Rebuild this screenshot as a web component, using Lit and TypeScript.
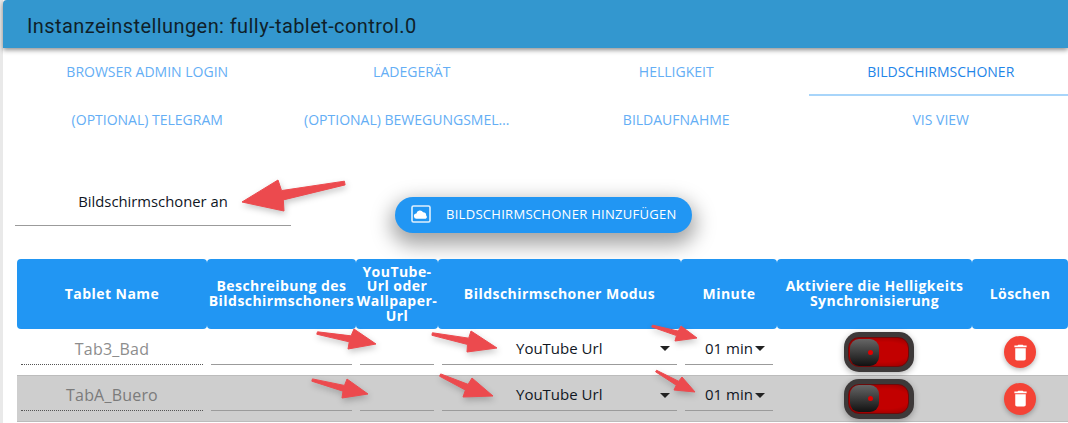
import { LitElement, html, css, svg } from "lit";
import { customElement } from "lit/decorators.js";

type P = [number, number];
const ARROWS: [P, P, P, P][] = [
  [[345, 183], [242, 202], [278, 180], [284, 211]],
  [[317, 333], [376, 344], [354, 329], [348, 349]],
  [[312, 380], [368, 394], [347, 379], [342, 398]],
  [[432, 334], [497, 348], [471, 331], [467, 352]],
  [[440, 375], [493, 396], [472, 378], [463, 397]],
  [[652, 326], [697, 338], [681, 326], [675, 341]],
  [[656, 371], [695, 392], [682, 377], [674, 390]],
];

function arrowPoints([tail, tip, w1, w2]: [P, P, P, P]) {
  const mx = (w1[0] + w2[0]) / 2 + (tail[0] - tip[0]) * 0.02;
  const my = (w1[1] + w2[1]) / 2 + (tail[1] - tip[1]) * 0.02;
  const j = (w: P, f: number): P => [mx + (w[0] - mx) * f, my + (w[1] - my) * f];
  const j1 = j(w1, 0.3);
  const j2 = j(w2, 0.3);
  const t = (w: P): P => [tail[0] + (w[0] - mx) * 0.12, tail[1] + (w[1] - my) * 0.12];
  return [t(w1), j1, w1, tip, w2, j2, t(w2)].map((p) => p.join(",")).join(" ");
}

const TABS = [
  "Browser Admin Login", "Ladegerät", "Helligkeit", "Bildschirmschoner",
  "(Optional) Telegram", "(Optional) Bewegungsmel…", "Bildaufnahme", "VIS View",
];
const HEADS = [
  "Tablet Name", "Beschreibung des Bildschirmschoners", "YouTube-Url oder Wallpaper-Url",
  "Bildschirmschoner Modus", "Minute", "Aktiviere die Helligkeits Synchronisierung", "Löschen",
];
const ROWS = ["Tab3_Bad", "TabA_Buero"];

@customElement("app-root")
export class AppRoot extends LitElement {
  static styles = css`
    :host {
      display: block;
      position: relative;
      width: 1068px;
      height: 423px;
      overflow: hidden;
      background: #fff;
      font-family: "Open Sans", sans-serif;
    }
    .page {
      border-left: 3px solid #e9e9e9;
      height: 423px;
      box-sizing: border-box;
    }
    .bar {
      height: 48px;
      background: #3397cf;
      border-top-left-radius: 4px;
      box-shadow: 0 2px 5px rgba(0, 0, 0, 0.45);
      display: flex;
      align-items: center;
      padding: 3px 0 0 24px;
      box-sizing: border-box;
      font: 400 20px Roboto, sans-serif;
      letter-spacing: 0.42px;
      color: #0f1f2a;
      position: relative;
    }
    .tabs {
      display: grid;
      grid-template-columns: repeat(4, 264.5px);
      grid-auto-rows: 48px;
      margin-left: 12px;
    }
    .tab {
      display: flex;
      align-items: center;
      justify-content: center;
      font-size: 14px;
      text-transform: uppercase;
      color: #64aef5;
      box-sizing: border-box;
      white-space: nowrap;
      padding-bottom: 2px;
    }
    .tab.on {
      color: #1f85e8;
      border-bottom: 2px solid #a8d5fa;
      padding-bottom: 0;
    }
    .tab.cut { padding-right: 10px; }
    .tools {
      display: flex;
      height: 115px;
      margin-left: 12px;
    }
    .pick {
      width: 276px;
      height: 49px;
      margin-top: 33px;
      border-bottom: 1px solid #9b9b9b;
      display: flex;
      align-items: center;
      justify-content: center;
      box-sizing: border-box;
      font-size: 14.8px;
      color: #10161f;
    }
    .add {
      width: 297px;
      height: 36px;
      margin: 53px 0 0 104px;
      border-radius: 18px;
      background: #2196f3;
      box-shadow: 0 8px 20px 4px rgba(0, 0, 0, 0.36);
      color: #fff;
      display: flex;
      align-items: center;
      font-size: 13px;
      letter-spacing: 0.29px;
      text-transform: uppercase;
      padding: 0 0 2px 16px;
      gap: 15px;
      box-sizing: border-box;
      white-space: nowrap;
      font-weight: 500;
    }
    .add svg { width: 20px; height: 20px; flex: none; }
    .grid {
      display: grid;
      grid-template-columns: 190px 149px 82px 243px 96px 195px 96px;
      margin-left: 14px;
    }
    .h {
      height: 70px;
      background: #2196f3;
      border-radius: 4px;
      color: #fff;
      display: flex;
      align-items: center;
      justify-content: center;
      text-align: center;
      font-size: 14px;
      line-height: 14.6px;
      font-weight: 700;
      letter-spacing: 0.45px;
    }
    .c {
      height: 47px;
      border-bottom: 1px solid #bcbcbc;
      box-sizing: border-box;
      display: flex;
      align-items: center;
      justify-content: center;
    }
    .c.alt { background: #cecece; height: 46px; }
    .field {
      flex: 1;
      align-self: flex-start;
      height: 36px;
      margin: 0 4px;
      padding-top: 3px;
      border-bottom: 1px solid #9b9b9b;
      display: flex;
      align-items: center;
      box-sizing: border-box;
      font-size: 15px;
      color: #10161f;
      position: relative;
    }
    .alt .field { height: 35px; padding-top: 1px; }
    .name {
      justify-content: center;
      border-bottom: 1px dotted #555;
      color: #8d8d8d;
      font-size: 16px;
      letter-spacing: 0.2px;
      padding-top: 5px;
    }
    .alt .name { color: #7b7b7b; padding-top: 3px; }
    .mode { padding-left: 74px; }
    .min { padding-left: 20px; }
    .caret {
      position: absolute;
      right: 7px;
      top: 17px;
      border-left: 5px solid transparent;
      border-right: 5px solid transparent;
      border-top: 5px solid #222;
    }
    .min .caret { right: 8px; }
    .sw {
      width: 70px;
      height: 40px;
      margin-left: 9px;
      border-radius: 15px;
      background: #3d3939;
      box-shadow: 0 2px 6px rgba(0, 0, 0, 0.3);
      padding: 5px 5px 5px 4px;
      box-sizing: border-box;
    }
    .track {
      height: 30px;
      border-radius: 11px;
      border: 1px solid #6d0a0a;
      background: radial-gradient(ellipse at 60% 50%, #c20000 50%, #880000 100%);
      box-sizing: border-box;
      display: flex;
      align-items: center;
      padding-left: 1px;
    }
    .knob {
      width: 29px;
      height: 27px;
      border-radius: 9px;
      background: linear-gradient(#666, #111);
      display: flex;
      align-items: center;
      justify-content: flex-end;
      padding-right: 6px;
      box-sizing: border-box;
    }
    .led { width: 5px; height: 5px; border-radius: 50%; background: #e00000; }
    .del {
      width: 32px;
      height: 32px;
      border-radius: 50%;
      background: #f44336;
      display: flex;
      align-items: center;
      justify-content: center;
      box-shadow: 0 2px 5px rgba(0, 0, 0, 0.28);
    }
    .del svg { width: 21px; height: 21px; fill: #fff; }
    .marks {
      position: absolute;
      inset: 0;
      width: 1068px;
      height: 423px;
      pointer-events: none;
      filter: drop-shadow(1px 3px 3px rgba(0, 0, 0, 0.22));
    }
    .marks polygon { fill: #ec4a4e; stroke: #ec4a4e; stroke-width: 1; stroke-linejoin: round; }
  `;

  private row(name: string, i: number) {
    const cls = i % 2 ? "c alt" : "c";
    return html`
      <div class=${cls}><div class="field name">${name}</div></div>
      <div class=${cls}><div class="field"></div></div>
      <div class=${cls}><div class="field"></div></div>
      <div class=${cls}><div class="field mode">YouTube Url<span class="caret"></span></div></div>
      <div class=${cls}><div class="field min">01 min<span class="caret"></span></div></div>
      <div class=${cls}>
        <div class="sw"><div class="track"><div class="knob"><span class="led"></span></div></div></div>
      </div>
      <div class=${cls}>
        <div class="del">
          <svg viewBox="0 0 24 24"><path d="M6 19c0 1.1.9 2 2 2h8c1.1 0 2-.9 2-2V7H6v12zM19 4h-3.5l-1-1h-5l-1 1H5v2h14V4z" /></svg>
        </div>
      </div>
    `;
  }

  render() {
    return html`
      <div class="page">
        <div class="bar">Instanzeinstellungen: fully-tablet-control.0</div>
        <div class="tabs">
          ${TABS.map((t, i) => html`<div class="tab ${i === 3 ? "on" : ""} ${i === 5 ? "cut" : ""}">${t}</div>`)}
        </div>
        <div class="tools">
          <div class="pick">Bildschirmschoner an</div>
          <div class="add">
            <svg viewBox="0 0 20 20">
              <rect x="1" y="2" width="18" height="16" rx="1.5" fill="none" stroke="#dff0fd" stroke-width="1.6" />
              <path fill="#fff" d="M5.8 14.8a2.7 2.7 0 0 1-.4-5.4 3.6 3.6 0 0 1 6.7-1.1 3.2 3.2 0 0 1 3.1 3.2 2.2 2.2 0 0 1-.5 3.3z" />
            </svg>
            <span>Bildschirmschoner hinzufügen</span>
          </div>
        </div>
        <div class="grid">
          ${HEADS.map((h) => html`<div class="h">${h}</div>`)}
          ${ROWS.map((r, i) => this.row(r, i))}
        </div>
      </div>
      <svg class="marks" viewBox="0 0 1068 423">
        ${ARROWS.map((a) => svg`<polygon points=${arrowPoints(a)} />`)}
      </svg>
    `;
  }
}
